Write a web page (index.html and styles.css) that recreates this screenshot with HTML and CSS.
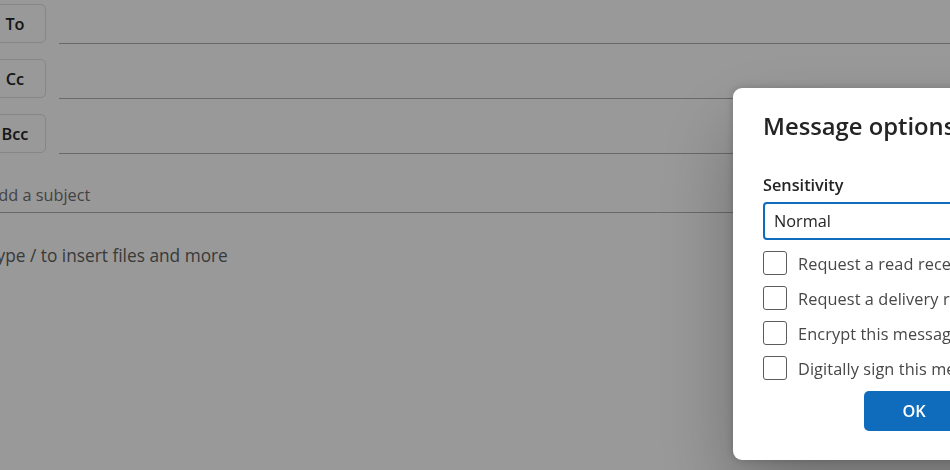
FILE: index.html
```html
<!DOCTYPE html>
<html lang="en">
<head>
  <meta charset="UTF-8" />
  <meta name="viewport" content="width=device-width, initial-scale=1.0"/>
  <title>Message options</title>
  <link rel="stylesheet" href="styles.css">
</head>
<body>
  <div class="compose">
    <div class="recipient-row">
      <button class="field-btn">To</button>
      <div class="field-line"></div>
    </div>
    <div class="recipient-row">
      <button class="field-btn">Cc</button>
      <div class="field-line"></div>
    </div>
    <div class="recipient-row">
      <button class="field-btn">Bcc</button>
      <div class="field-line"></div>
    </div>
    <div class="subject">Add a subject</div>
    <div class="body-hint">Type / to insert files and more</div>
  </div>

  <div class="overlay"></div>

  <div class="dialog">
    <h2 class="dialog-title">Message options</h2>
    <div class="field-label">Sensitivity</div>
    <div class="dropdown">Normal</div>
    <div class="checks">
      <label class="check"><span class="box"></span><span class="check-text">Request a read receipt</span></label>
      <label class="check"><span class="box"></span><span class="check-text">Request a delivery receipt</span></label>
      <label class="check"><span class="box"></span><span class="check-text">Encrypt this message</span></label>
      <label class="check"><span class="box"></span><span class="check-text">Digitally sign this message</span></label>
    </div>
    <div class="actions">
      <button class="btn-primary">OK</button>
    </div>
  </div>
</body>
</html>
```

FILE: styles.css
```css
body {
  margin: 0;
  font-family: 'Open Sans', sans-serif;
  font-size: 16.3px;
  color: #242424;
  background: #ffffff;
  overflow: hidden;
  height: 470px;
}
.compose {
  margin-left: -16px;
  padding-top: 4px;
}
.recipient-row {
  display: flex;
  gap: 13px;
  height: 39px;
  margin-bottom: 16px;
}
.field-btn {
  width: 62px;
  height: 39px;
  border: 1px solid #e0e0e0;
  border-radius: 5px;
  background: #ffffff;
  font-family: 'Open Sans', sans-serif;
  font-size: 16.3px;
  font-weight: 600;
  color: #242424;
  padding: 0;
}
.field-line {
  flex: 1;
  border-bottom: 1px solid #b0b0b0;
  margin-bottom: -1px;
}
.subject {
  padding: 15px 0 6px 4px;
  line-height: 22px;
  color: #707070;
  border-bottom: 1px solid #b0b0b0;
}
.body-hint {
  padding: 31px 0 0 3px;
  font-size: 17.3px;
  line-height: 24px;
  color: #616161;
}
.overlay {
  position: fixed;
  inset: 0;
  background: rgba(0, 0, 0, 0.4);
}
.dialog {
  position: fixed;
  left: 733px;
  top: 88px;
  width: 420px;
  padding: 22px 30px 29px;
  background: #ffffff;
  border-radius: 9px;
  box-shadow: 0 0 10px rgba(0, 0, 0, 0.2), 0 40px 80px rgba(0, 0, 0, 0.28);
}
.dialog-title {
  margin: 0 0 32px;
  font-size: 23.8px;
  font-weight: 600;
  line-height: 32px;
  color: #242424;
}
.field-label {
  font-weight: 600;
  line-height: 22px;
  color: #242424;
  margin-bottom: 6px;
}
.dropdown {
  height: 38px;
  box-sizing: border-box;
  border: 2px solid #0f6cbd;
  border-radius: 4px;
  padding: 6px 9px;
  line-height: 22px;
  color: #242424;
}
.checks {
  margin: 5px 0 6px;
}
.check {
  display: flex;
  align-items: center;
  gap: 11px;
  height: 35px;
  line-height: 22px;
  color: #474747;
  white-space: nowrap;
}
.check-text {
  padding-top: 3px;
  letter-spacing: 0.1px;
}
.box {
  width: 24px;
  height: 24px;
  box-sizing: border-box;
  border: 1px solid #5c5c5c;
  border-radius: 3px;
  flex-shrink: 0;
}
.actions {
  display: flex;
  padding-left: 101px;
}
.btn-primary {
  width: 100px;
  height: 40px;
  border: none;
  border-radius: 5px;
  background: #0f6cbd;
  color: #ffffff;
  font-family: 'Open Sans', sans-serif;
  font-size: 16.3px;
  font-weight: 600;
}
```
